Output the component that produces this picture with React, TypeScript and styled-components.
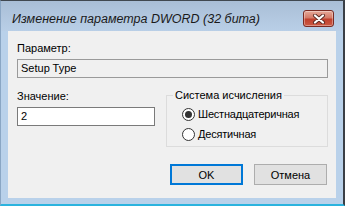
import React from 'react';
import styled, { createGlobalStyle } from 'styled-components';

const GlobalStyle = createGlobalStyle`
    html, body {
        margin: 0;
        padding: 0;
        background: #ffffff;
    }
    * {
        box-sizing: border-box;
    }
`;

const Window = styled.div`
    width: 345px;
    height: 206px;
    display: flex;
    flex-direction: column;
    background: #b9d1ea;
    border-top: 1px solid #404850;
    border-left: 1px solid #8aa6c4;
    border-right: 2px solid #3a3f46;
    border-bottom: 2px solid #2bb3de;
    padding: 0 7px 6px 7px;
    font-family: "Liberation Sans", Arial, sans-serif;
    font-size: 11px;
    color: #000;
`;

const TitleBar = styled.div`
    height: 30px;
    margin: 0 -7px;
    padding: 9px 9px 4px 11px;
    display: flex;
    align-items: center;
    justify-content: space-between;
    background: linear-gradient(#a9bed6, #b9cfe7);
`;

const Title = styled.div`
    font-size: 12.5px;
    font-style: italic;
    color: #1a1a1a;
    white-space: nowrap;
`;

const CloseButton = styled.div`
    width: 31px;
    height: 17px;
    border: 1px solid #7a2a22;
    border-radius: 3px;
    background: linear-gradient(#e6a999 0%, #d47a68 45%, #c0402d 55%, #cc5a44 100%);
    display: flex;
    align-items: center;
    justify-content: center;
    box-shadow: inset 0 0 0 1px rgba(255, 255, 255, 0.35);
`;

const Client = styled.div`
    flex: 1;
    background: #f0f0f0;
    display: flex;
    flex-direction: column;
    padding: 10px 8px 0 9px;
`;

const Label = styled.div`
    line-height: 14px;
    margin-bottom: 4px;
    white-space: nowrap;
`;

const TextBox = styled.div<{ $readOnly?: boolean }>`
    height: 19px;
    line-height: 17px;
    padding: 0 3px;
    border: 1px solid ${p => (p.$readOnly ? '#9a9a9a' : '#7a7a7a')};
    background: ${p => (p.$readOnly ? '#f0f0f0' : '#ffffff')};
    white-space: nowrap;
`;

const Row = styled.div`
    display: grid;
    grid-template-columns: 138px 1fr;
    column-gap: 11px;
    margin-top: 10px;
`;

const Column = styled.div`
    padding-top: 1px;
`;

const GroupBox = styled.fieldset`
    margin: 0;
    padding: 2px 4px 2px 15px;
    border: 1px solid #dcdcdc;
    height: 59px;
    min-width: 0;
`;

const Legend = styled.legend`
    padding: 0 2px;
    margin-left: -9px;
    line-height: 14px;
    white-space: nowrap;
`;

const RadioRow = styled.div`
    height: 20px;
    display: flex;
    align-items: center;
    gap: 3px;
    white-space: nowrap;
    letter-spacing: -0.2px;
`;

const RadioCircle = styled.span<{ $checked?: boolean }>`
    flex: none;
    width: 13px;
    height: 13px;
    border-radius: 50%;
    border: 1px solid #333333;
    background: #ffffff;
    display: flex;
    align-items: center;
    justify-content: center;
    &::after {
        content: '';
        width: 7px;
        height: 7px;
        border-radius: 50%;
        background: ${p => (p.$checked ? '#333333' : 'transparent')};
    }
`;

const Buttons = styled.div`
    display: flex;
    justify-content: flex-end;
    gap: 11px;
    margin-top: 17px;
    padding-right: 1px;
`;

const Button = styled.div<{ $default?: boolean }>`
    width: 73px;
    height: 21px;
    display: flex;
    align-items: center;
    justify-content: center;
    background: #e1e1e1;
    border: ${p => (p.$default ? '2px solid #0078d7' : '1px solid #adadad')};
`;

const CloseGlyph = () => (
    <svg width="14" height="10" viewBox="0 0 14 10">
        <path d="M3 1.5 L11 8.5 M11 1.5 L3 8.5" stroke="#5a2a24" strokeWidth="4" strokeLinecap="round" />
        <path d="M3 1.5 L11 8.5 M11 1.5 L3 8.5" stroke="#ffffff" strokeWidth="2.2" strokeLinecap="round" />
    </svg>
);

const App = () => {
    return (
        <>
            <GlobalStyle />
            <Window>
                <TitleBar>
                    <Title>Изменение параметра DWORD (32 бита)</Title>
                    <CloseButton>
                        <CloseGlyph />
                    </CloseButton>
                </TitleBar>
                <Client>
                    <Label>Параметр:</Label>
                    <TextBox $readOnly>Setup Type</TextBox>
                    <Row>
                        <Column>
                            <Label>Значение:</Label>
                            <TextBox>2</TextBox>
                        </Column>
                        <GroupBox>
                            <Legend>Система исчисления</Legend>
                            <RadioRow>
                                <RadioCircle $checked />
                                Шестнадцатеричная
                            </RadioRow>
                            <RadioRow>
                                <RadioCircle />
                                Десятичная
                            </RadioRow>
                        </GroupBox>
                    </Row>
                    <Buttons>
                        <Button $default>OK</Button>
                        <Button>Отмена</Button>
                    </Buttons>
                </Client>
            </Window>
        </>
    );
};

export default App;
